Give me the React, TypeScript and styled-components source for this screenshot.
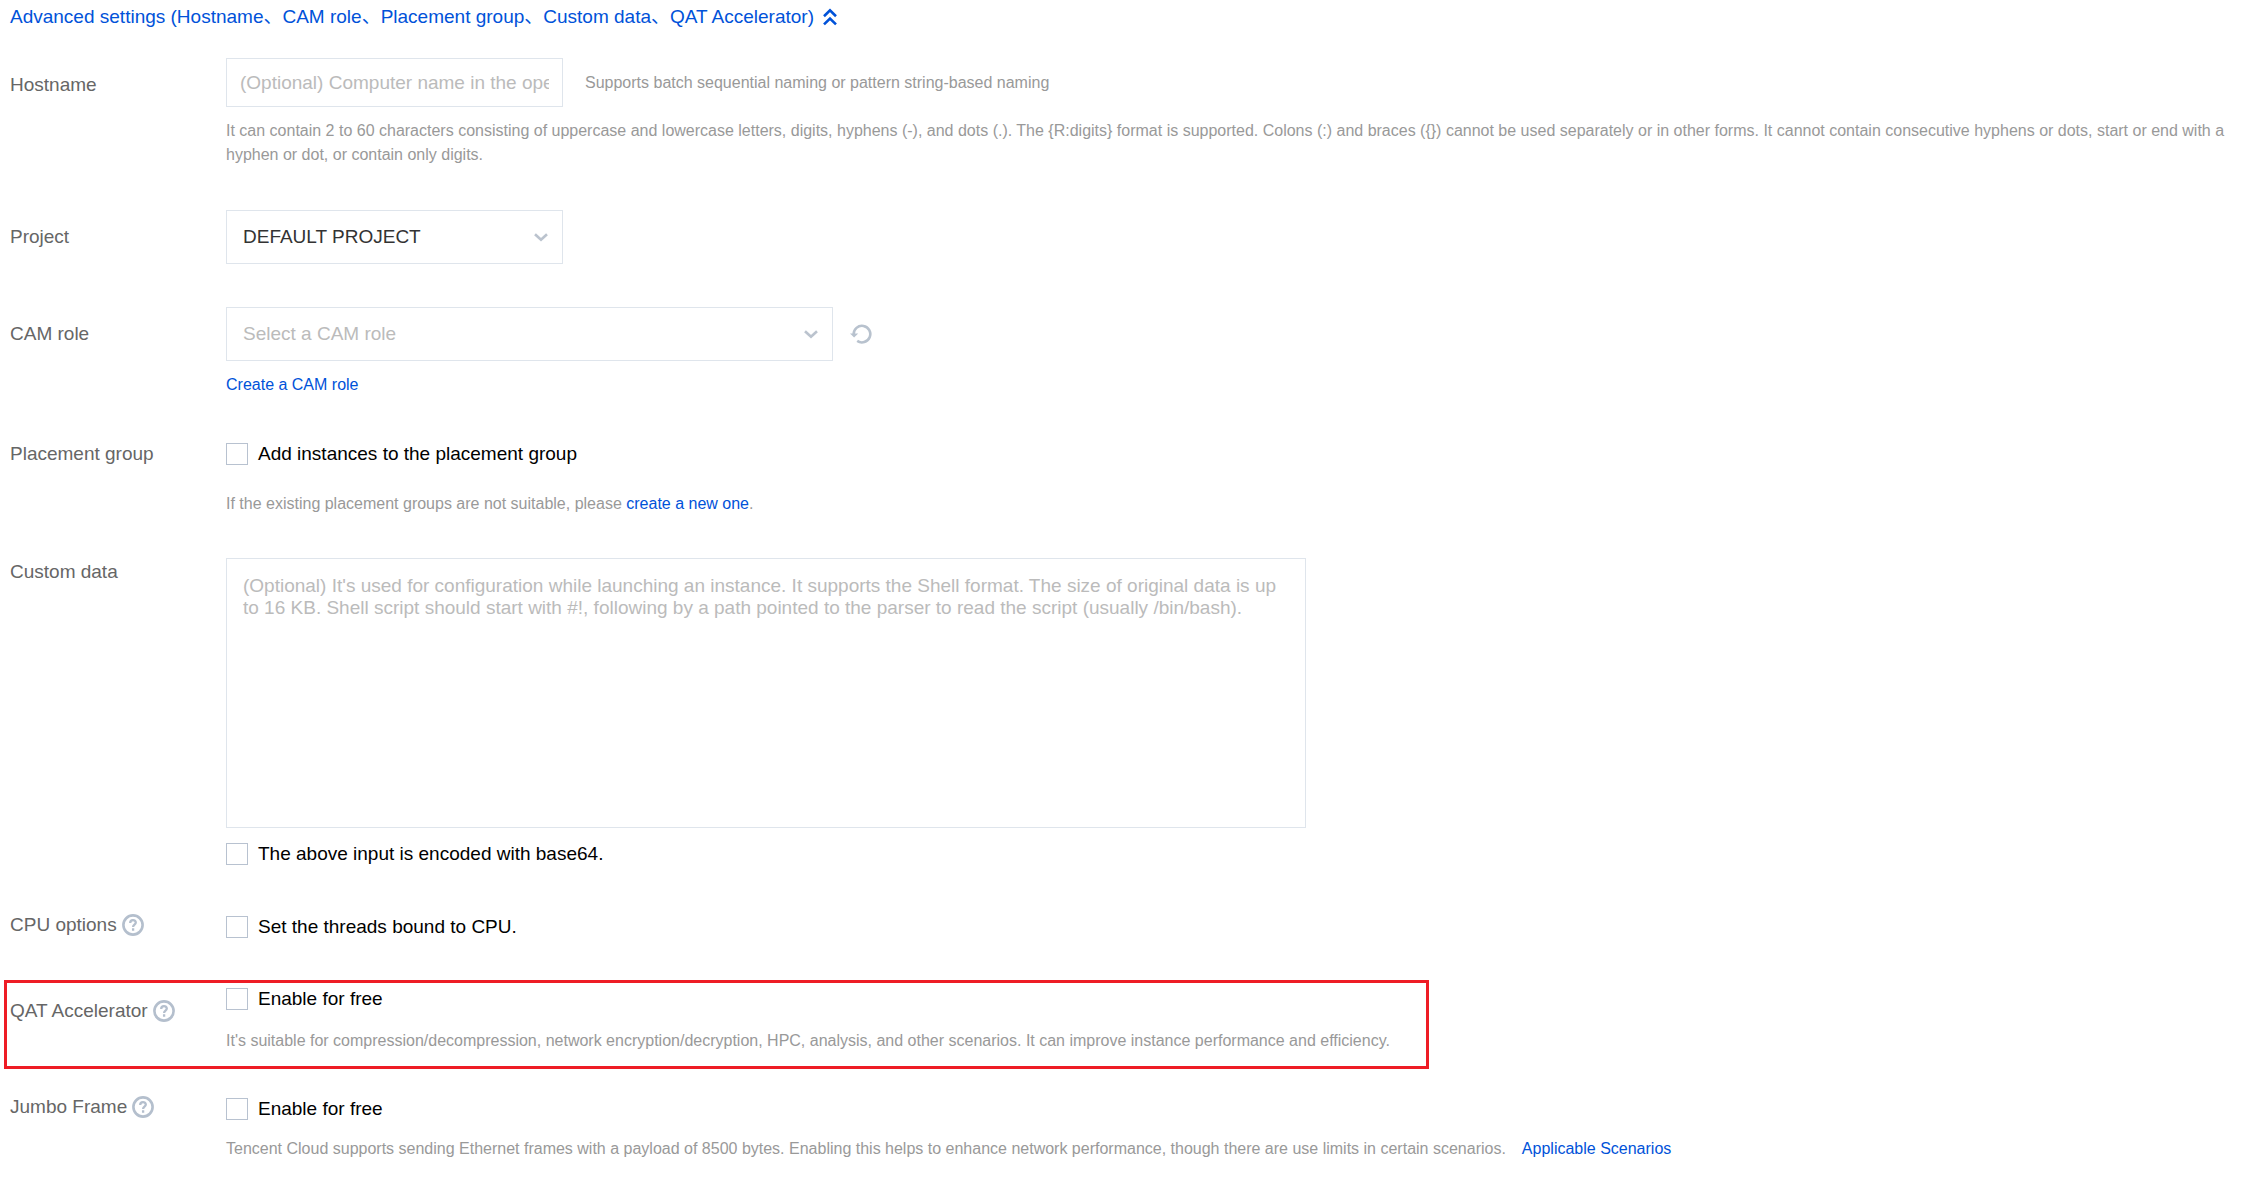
import React, { useId, useState } from "react";
import styled, { createGlobalStyle } from "styled-components";

const BLUE = "#0052d9";

const HOSTNAME_RULES =
  "It can contain 2 to 60 characters consisting of uppercase and lowercase letters, digits, hyphens (-), and dots (.). The {R:digits} format is supported. Colons (:) and braces ({}) cannot be used separately or in other forms. It cannot contain consecutive hyphens or dots, start or end with a hyphen or dot, or contain only digits.";

const GlobalStyle = createGlobalStyle`
  * { box-sizing: border-box; }
  body {
    margin: 0;
    background: #fff;
    color: #000;
    font-family: "Liberation Sans", Arial, "Noto Sans CJK SC", sans-serif;
    font-size: 19px;
    line-height: 24px;
  }
  button, input, select, textarea { font: inherit; }
`;

const Page = styled.main`
  padding: 4px 10px 18px;
`;

const Toggle = styled.button`
  display: flex;
  align-items: center;
  gap: 9px;
  margin: 0;
  padding: 0;
  border: 0;
  background: none;
  color: ${BLUE};
  line-height: 26px;
  cursor: pointer;
`;

const Row = styled.div<{ $top: number }>`
  display: grid;
  grid-template-columns: 216px minmax(0, 1fr);
  padding-top: ${(p) => p.$top}px;
`;

const HighlightRow = styled.div`
  display: grid;
  grid-template-columns: 216px minmax(0, 1fr);
  width: fit-content;
  margin: 41px 0 0 -6px;
  padding: 4px 36px 13px 3px;
  border: 3px solid #ee1c25;
`;

const LabelCell = styled.div<{ $top?: number }>`
  display: flex;
  align-items: center;
  align-self: start;
  gap: 5px;
  padding-top: ${(p) => p.$top ?? 0}px;
  color: #666;
  white-space: nowrap;
`;

const Inline = styled.div`
  display: flex;
  align-items: center;
`;

const TextInput = styled.input`
  width: 337px;
  height: 49px;
  padding: 0 13px;
  border: 1px solid #dfe5ec;
  border-radius: 0;
  outline: 0;
  color: #333;
  &::placeholder { color: #bbb; opacity: 1; }
`;

const Side = styled.span`
  margin-left: 22px;
  color: #999;
  font-size: 16px;
`;

const Hint = styled.p<{ $top: number }>`
  margin: ${(p) => p.$top}px 0 0;
  color: #999;
  font-size: 16px;
`;

const Link = styled.a<{ $gap?: number }>`
  margin-left: ${(p) => p.$gap ?? 0}px;
  color: ${BLUE};
  text-decoration: none;
`;

const SelectBox = styled.div<{ $width: number }>`
  display: grid;
  align-items: center;
  width: ${(p) => p.$width}px;
  height: 54px;
  & > * { grid-area: 1 / 1; }
  & > svg { justify-self: end; margin-right: 15px; pointer-events: none; }
`;

const Select = styled.select<{ $empty?: boolean }>`
  appearance: none;
  width: 100%;
  height: 100%;
  padding: 0 40px 0 16px;
  border: 1px solid #dfe5ec;
  border-radius: 0;
  background: #fff;
  color: ${(p) => (p.$empty ? "#bbb" : "#333")};
`;

const IconButton = styled.button`
  display: flex;
  margin: 0 0 0 17px;
  padding: 0;
  border: 0;
  background: none;
  cursor: pointer;
`;

const TextArea = styled.textarea`
  display: block;
  width: 1080px;
  height: 270px;
  padding: 16px;
  border: 1px solid #dfe5ec;
  border-radius: 0;
  outline: 0;
  resize: none;
  line-height: 22px;
  &::placeholder { color: #bbb; opacity: 1; }
`;

const CheckLabel = styled.label<{ $top?: number }>`
  display: flex;
  align-items: center;
  gap: 10px;
  width: fit-content;
  margin-top: ${(p) => p.$top ?? 0}px;
`;

const Box = styled.input`
  appearance: none;
  width: 22px;
  height: 22px;
  margin: 0;
  border: 1px solid #b8c2d0;
  background: #fff;
  &:checked { background: ${BLUE}; border-color: ${BLUE}; }
`;

const DoubleUp = () => (
  <svg width="14" height="18" viewBox="0 0 14 18" fill="none" stroke={BLUE} strokeWidth="2.6" aria-hidden="true">
    <path d="M1 8.2 7 2.4 13 8.2M1 16.4 7 10.6 13 16.4" />
  </svg>
);

const Chevron = () => (
  <svg width="14" height="9" viewBox="0 0 14 9" fill="none" stroke="#bbc3ce" strokeWidth="2.6" aria-hidden="true">
    <path d="M1 1.2 7 6.8 13 1.2" />
  </svg>
);

const Refresh = () => (
  <svg width="22" height="22" viewBox="0 0 22 22" fill="none" aria-hidden="true">
    <path d="M3.7 11.5A8.3 8.3 0 1 1 7.2 17.9" stroke="#b8c2ce" strokeWidth="2.6" />
    <path d="M0 10.6h8.2L4.1 14.6z" fill="#b8c2ce" />
  </svg>
);

const Help = () => (
  <svg width="22" height="22" viewBox="0 0 22 22" fill="none" stroke="#b4bfcd" strokeWidth="2.6" aria-hidden="true">
    <circle cx="11" cy="11" r="9.6" />
    <path d="M8.2 8.9c0-3.6 5.6-3.6 5.6-.4 0 2-2.7 2.2-2.7 4.4M11.1 14.3v2.5" strokeWidth="2.3" />
  </svg>
);

const Check = ({ text, top }: { text: string; top?: number }) => {
  const id = useId();
  return (
    <CheckLabel htmlFor={id} $top={top}>
      <Box type="checkbox" id={id} />
      {text}
    </CheckLabel>
  );
};

export default function App() {
  const [open, setOpen] = useState(true);
  return (
    <Page>
      <GlobalStyle />
      <Toggle type="button" aria-expanded={open} onClick={() => setOpen(!open)}>
        Advanced settings (Hostname、CAM role、Placement group、Custom data、QAT Accelerator)
        <DoubleUp />
      </Toggle>
      {open && (
        <>
          <Row $top={28}>
            <LabelCell $top={15}><label htmlFor="hostname">Hostname</label></LabelCell>
            <div>
              <Inline>
                <TextInput id="hostname" placeholder="(Optional) Computer name in the operating system" />
                <Side>Supports batch sequential naming or pattern string-based naming</Side>
              </Inline>
              <Hint $top={12}>{HOSTNAME_RULES}</Hint>
            </div>
          </Row>
          <Row $top={43}>
            <LabelCell $top={15}><label htmlFor="project">Project</label></LabelCell>
            <SelectBox $width={337}>
              <Select id="project"><option>DEFAULT PROJECT</option></Select>
              <Chevron />
            </SelectBox>
          </Row>
          <Row $top={43}>
            <LabelCell $top={15}><label htmlFor="cam">CAM role</label></LabelCell>
            <div>
              <Inline>
                <SelectBox $width={607}>
                  <Select id="cam" $empty><option>Select a CAM role</option></Select>
                  <Chevron />
                </SelectBox>
                <IconButton type="button" aria-label="Refresh"><Refresh /></IconButton>
              </Inline>
              <Hint $top={12}><Link href="#cam-role">Create a CAM role</Link></Hint>
            </div>
          </Row>
          <Row $top={45}>
            <LabelCell>Placement group</LabelCell>
            <div>
              <Check text="Add instances to the placement group" />
              <Hint $top={26}>
                If the existing placement groups are not suitable, please <Link href="#new-group">create a new one</Link>.
              </Hint>
            </div>
          </Row>
          <Row $top={42}>
            <LabelCell $top={2}><label htmlFor="data">Custom data</label></LabelCell>
            <div>
              <TextArea
                id="data"
                placeholder="(Optional) It's used for configuration while launching an instance. It supports the Shell format. The size of original data is up to 16 KB. Shell script should start with #!, following by a path pointed to the parser to read the script (usually /bin/bash)."
              />
              <Check text="The above input is encoded with base64." top={14} />
            </div>
          </Row>
          <Row $top={47}>
            <LabelCell>CPU options<Help /></LabelCell>
            <Check text="Set the threads bound to CPU." top={2} />
          </Row>
          <HighlightRow>
            <LabelCell $top={12}>QAT Accelerator<Help /></LabelCell>
            <div>
              <Check text="Enable for free" />
              <Hint $top={18}>
                It's suitable for compression/decompression, network encryption/decryption, HPC, analysis, and other scenarios. It can improve instance performance and efficiency.
              </Hint>
            </div>
          </HighlightRow>
          <Row $top={26}>
            <LabelCell>Jumbo Frame<Help /></LabelCell>
            <div>
              <Check text="Enable for free" top={2} />
              <Hint $top={16}>
                Tencent Cloud supports sending Ethernet frames with a payload of 8500 bytes. Enabling this helps to enhance network performance, though there are use limits in certain scenarios.
                <Link href="#scenarios" $gap={16}>Applicable Scenarios</Link>
              </Hint>
            </div>
          </Row>
        </>
      )}
    </Page>
  );
}
